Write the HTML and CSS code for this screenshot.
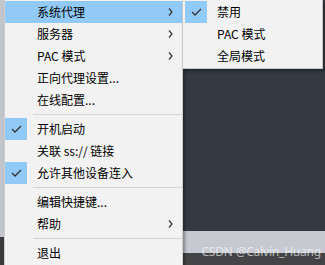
FILE: index.html
```html
<!DOCTYPE html>
<html lang="zh">
<head>
<meta charset="utf-8">
<link rel="stylesheet" href="styles.css">
</head>
<body>
<div class="screen">
  <div class="desk">
    <div class="left-strip"></div>
    <div class="app">
      <div class="app-dark"></div>
      <div class="app-band"></div>
      <div class="app-bottom"></div>
    </div>
  </div>
  <div class="watermark">CSDN @Calvin_Huang</div>

  <div class="menu main">
    <div class="item hover"><span class="check"></span><span class="label">系统代理</span><svg class="arrow" width="5" height="8" viewBox="0 0 5 8"><path d="M1 0.5 L4 4 L1 7.5" fill="none" stroke="#333" stroke-width="1.2"/></svg></div>
    <div class="item"><span class="check"></span><span class="label">服务器</span><svg class="arrow" width="5" height="8" viewBox="0 0 5 8"><path d="M1 0.5 L4 4 L1 7.5" fill="none" stroke="#333" stroke-width="1.2"/></svg></div>
    <div class="item"><span class="check"></span><span class="label">PAC 模式</span><svg class="arrow" width="5" height="8" viewBox="0 0 5 8"><path d="M1 0.5 L4 4 L1 7.5" fill="none" stroke="#333" stroke-width="1.2"/></svg></div>
    <div class="item"><span class="check"></span><span class="label">正向代理设置...</span></div>
    <div class="item"><span class="check"></span><span class="label">在线配置...</span></div>
    <div class="sep"></div>
    <div class="item"><span class="check on"><svg width="11" height="8" viewBox="0 0 11 8"><path d="M1 4 L4 7 L10 1" fill="none" stroke="#333" stroke-width="1.3"/></svg></span><span class="label">开机启动</span></div>
    <div class="item"><span class="check"></span><span class="label">关联 ss:// 链接</span></div>
    <div class="item"><span class="check on"><svg width="11" height="8" viewBox="0 0 11 8"><path d="M1 4 L4 7 L10 1" fill="none" stroke="#333" stroke-width="1.3"/></svg></span><span class="label">允许其他设备连入</span></div>
    <div class="sep"></div>
    <div class="item"><span class="check"></span><span class="label">编辑快捷键...</span></div>
    <div class="item"><span class="check"></span><span class="label">帮助</span><svg class="arrow" width="5" height="8" viewBox="0 0 5 8"><path d="M1 0.5 L4 4 L1 7.5" fill="none" stroke="#333" stroke-width="1.2"/></svg></div>
    <div class="sep"></div>
    <div class="item"><span class="check"></span><span class="label">退出</span></div>
  </div>

  <div class="menu sub">
    <div class="item"><span class="check on"><svg width="11" height="8" viewBox="0 0 11 8"><path d="M1 4 L4 7 L10 1" fill="none" stroke="#333" stroke-width="1.3"/></svg></span><span class="label">禁用</span></div>
    <div class="item"><span class="check"></span><span class="label">PAC 模式</span></div>
    <div class="item"><span class="check"></span><span class="label">全局模式</span></div>
  </div>
</div>
</body>
</html>
```

FILE: styles.css
```css
* { box-sizing: border-box; }
html, body { margin: 0; padding: 0; }
body {
  width: 325px;
  height: 265px;
  overflow: hidden;
  font-family: "Noto Sans CJK SC", "Noto Sans", sans-serif;
  font-size: 12px;
  color: #000;
}
.screen {
  position: relative;
  width: 325px;
  height: 265px;
  overflow: hidden;
}
.desk {
  display: flex;
  width: 100%;
  height: 100%;
}
.left-strip {
  width: 4px;
  background: linear-gradient(#c2c5c9 0, #c2c5c9 237px, #3c3c3c 237px);
}
.app {
  flex: 1;
  display: flex;
  flex-direction: column;
}
.app-dark { height: 231px; background: #333a44; }
.app-band { height: 22px; background: #c6c9d0; }
.app-bottom { flex: 1; background: #444446; }

.watermark {
  position: absolute;
  right: 4px;
  top: 243px;
  font-family: "Noto Sans", "DejaVu Sans", sans-serif;
  font-size: 12px;
  color: rgba(255, 255, 255, 0.62);
  letter-spacing: -0.2px;
}

.menu {
  position: absolute;
  background: #f2f2f2;
  border: 1px solid #cfcfcf;
  box-shadow: 2px 2px 3px rgba(0, 0, 0, 0.35);
  display: flex;
  flex-direction: column;
}
.main {
  left: 4px;
  top: 0;
  width: 179px;
  height: 280px;
  padding: 1px 0 0 0;
  border-top: none;
}
.sub {
  left: 182px;
  top: 0;
  width: 141px;
  padding: 1px 2px 1px 2px;
  border-top: none;
  border-color: #c8c8c8;
}
.item {
  position: relative;
  height: 22px;
  display: flex;
  align-items: center;
  line-height: 22px;
  white-space: nowrap;
}
.item.hover { background: #91c9f7; }
.check {
  width: 22px;
  height: 22px;
  flex: none;
  display: flex;
  align-items: center;
  justify-content: center;
}
.check.on { background: #91c9f7; }
.label {
  margin-left: 10px;
}
.arrow {
  position: absolute;
  right: 9px;
  top: 7px;
}
.sep {
  height: 7px;
  display: flex;
  align-items: center;
  padding-left: 28px;
}
.sep::before {
  content: "";
  display: block;
  width: 100%;
  height: 1px;
  background: #d5d5d5;
}
```
